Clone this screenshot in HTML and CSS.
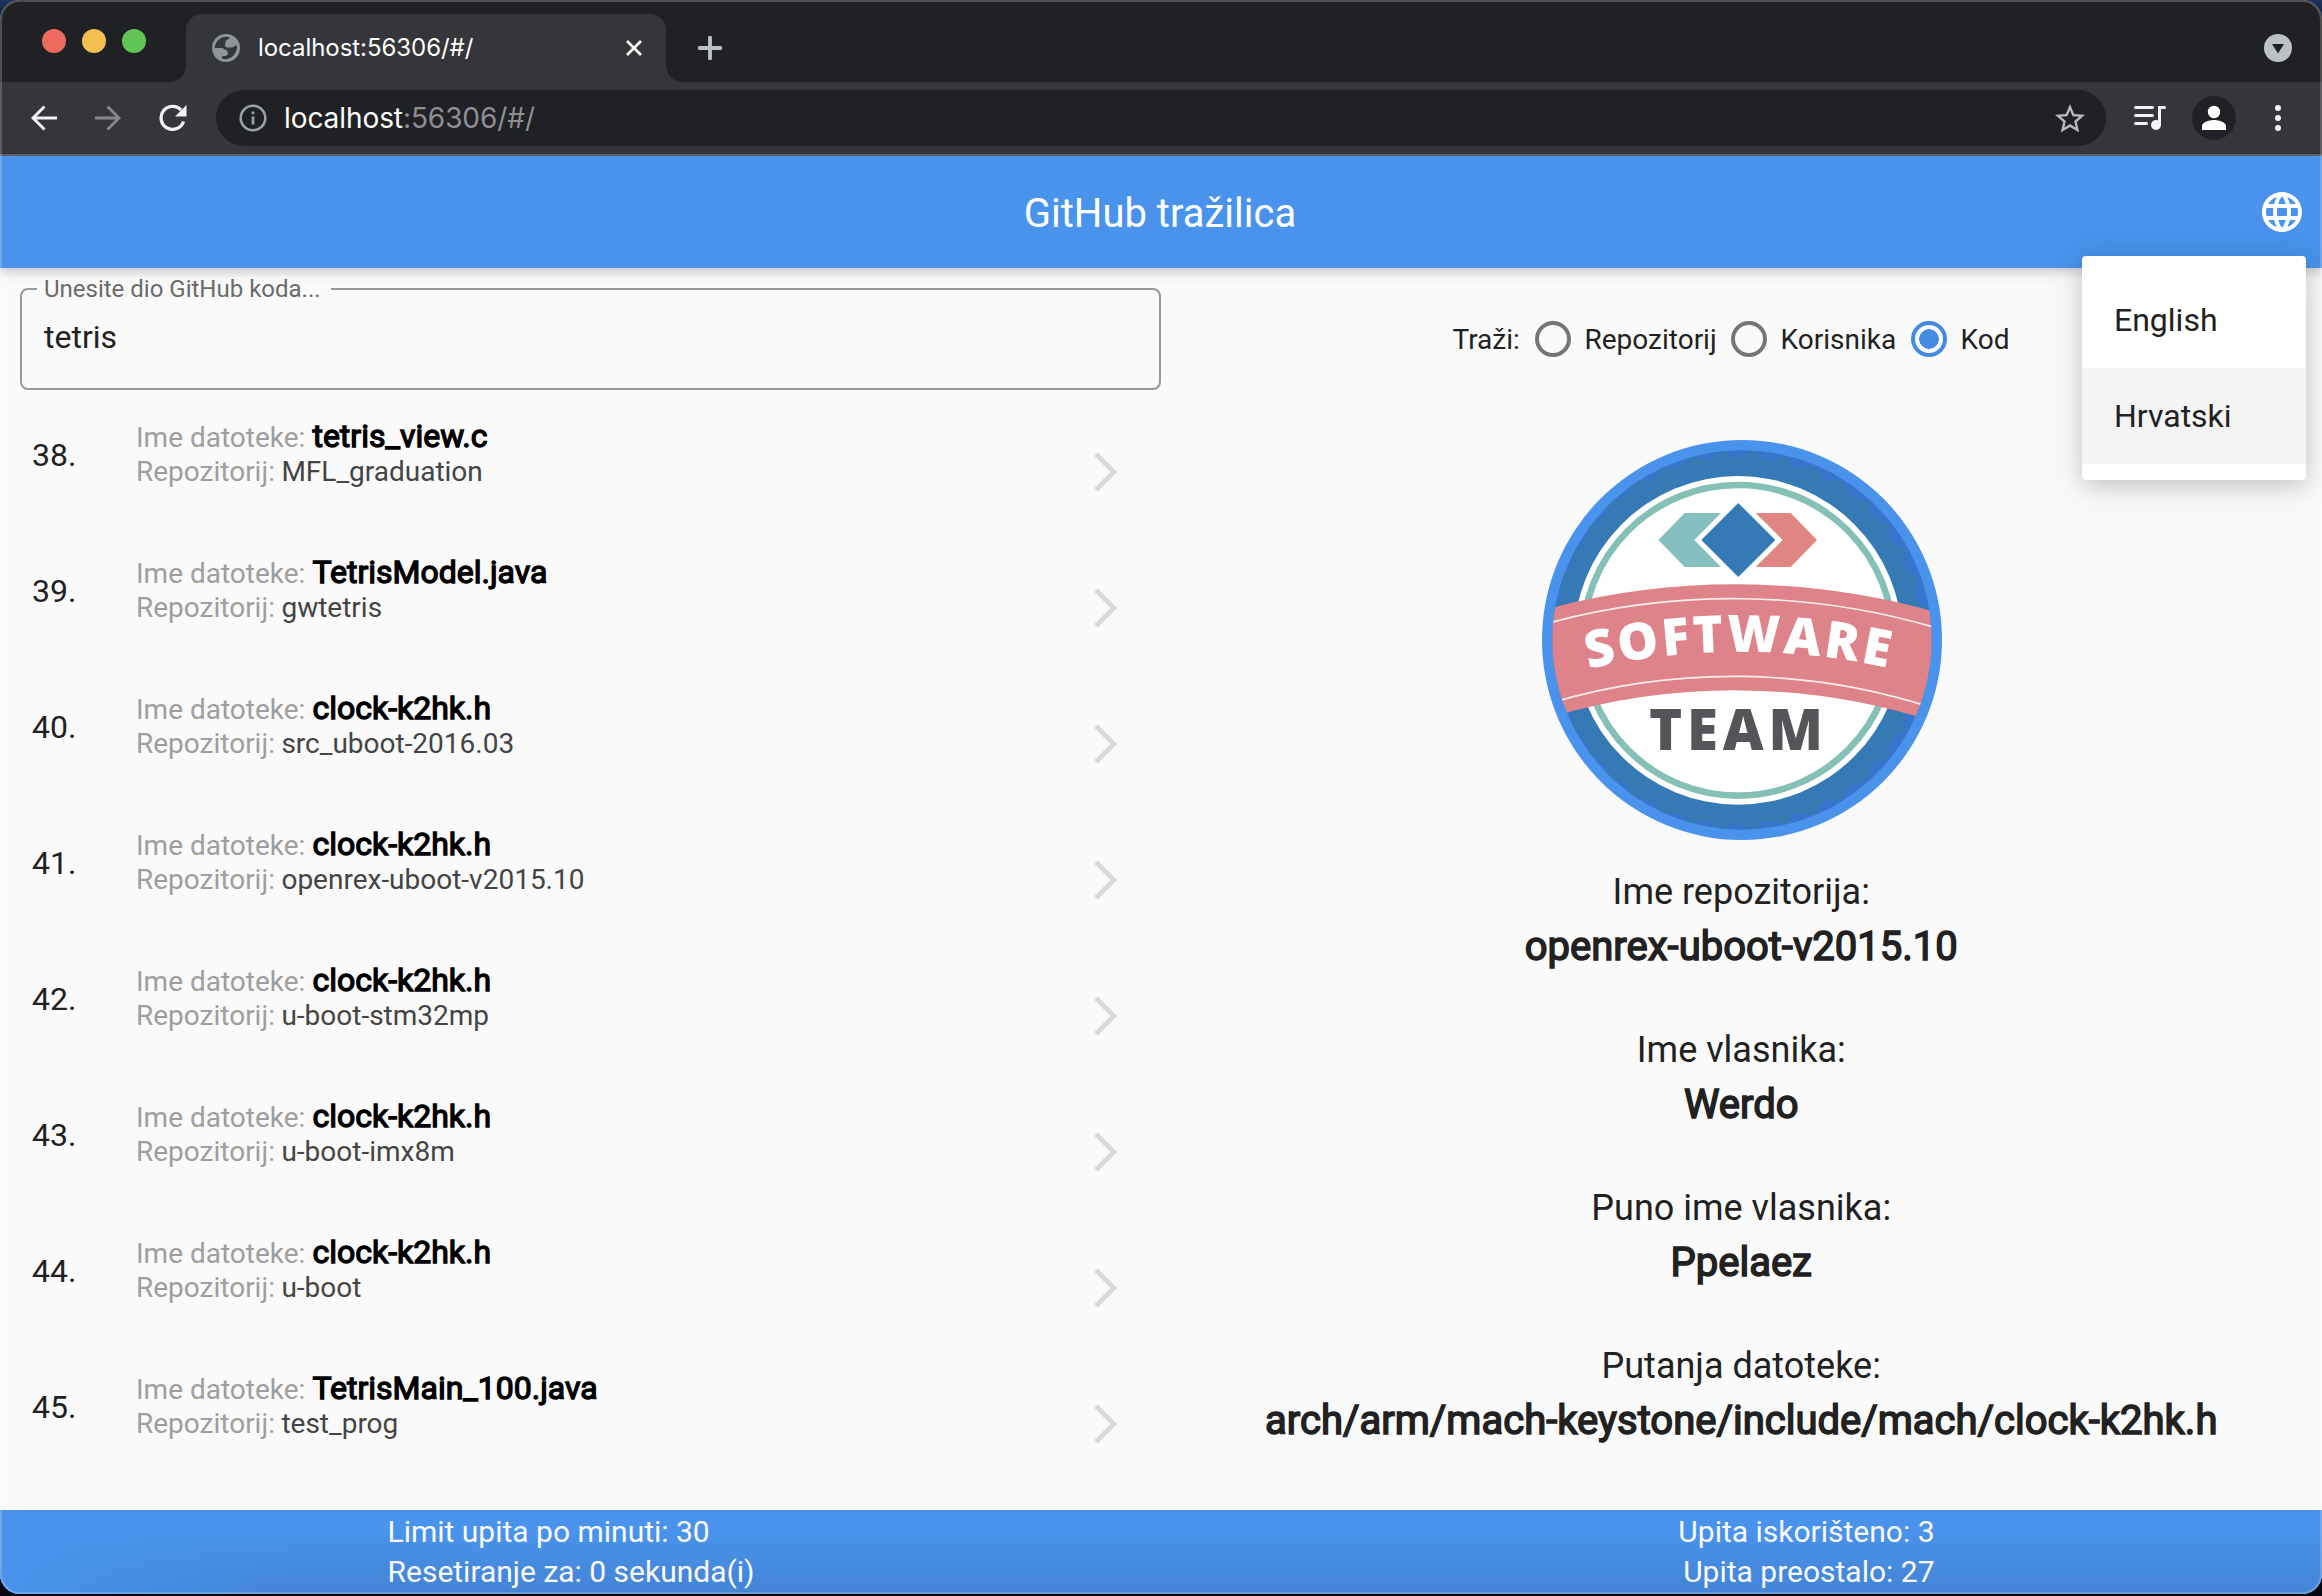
FILE: index.html
```html
<!DOCTYPE html>
<html lang="hr">
<head>
<meta charset="utf-8">
<title>GitHub tražilica</title>
<link rel="stylesheet" href="styles.css">
</head>
<body>
<svg class="defs" width="0" height="0">
  <symbol id="chevron" viewBox="0 0 24 40"><path d="M2 2.2 19.8 20 2 37.8" fill="none" stroke="#d9d9d9" stroke-width="5"/></symbol>
</svg>
<div class="window">
  <div class="tabstrip">
    <div class="lights"><i class="light red"></i><i class="light yellow"></i><i class="light green"></i></div>
    <div class="tab">
      <svg class="favicon" viewBox="2 2 20 20" width="28" height="28"><circle cx="12" cy="12" r="10" fill="#8f949a"/><path d="M4 12C4 8 7.500 4.200 12 4l2.500.4c.3 1.600-2.700 1.500-2.700 3 0 1.200-.6 1.700-.6 2.400 0 1.300 1.300 1.900 2.600 1.900h2.400c1 0 1.700-.6 1.800-1.300h1.800c.3 4.200-2.400 9-7.800 9.600l-2.800-.3v-2h1.900c1.500 0 2.300-.9 2.300-2.200 0-1.600-1.300-2.400-2.700-2.400-.5-.9-1.100-1.100-2.200-1.100z" fill="#35363a"/></svg>
      <span class="tab-title">localhost:56306/#/</span>
      <svg class="close" viewBox="0 0 16 16" width="16" height="16"><path d="M1 1l14 14M15 1 1 15" stroke="#fff" stroke-width="2.600"/></svg>
    </div>
    <svg class="plus" viewBox="0 0 24 24" width="24" height="24"><path d="M12 1.500v21M1.500 12h21" stroke="#bdc1c6" stroke-width="3.800" stroke-linecap="round"/></svg>
    <svg class="caret" viewBox="0 0 28 28" width="28" height="28"><circle cx="14" cy="14" r="14" fill="#bdc1c6"/><path d="M8 10h12l-6 9.500z" fill="#202124"/></svg>
  </div>
  <div class="toolbar">
    <svg class="nav" viewBox="0 0 26 26" width="26" height="26"><path d="M26 13H2.500M13.500 1.500 2 13l11.500 11.500" fill="none" stroke="#f1f3f4" stroke-width="3"/></svg>
    <svg class="nav" viewBox="0 0 26 26" width="26" height="26"><path d="M0 13h23.500M12.500 1.500 24 13 12.500 24.500" fill="none" stroke="#86878a" stroke-width="3"/></svg>
    <svg class="nav" viewBox="0 0 28 28" width="28" height="28"><path d="M24.500 17.500A11.500 11.500 0 1 1 22 6" fill="none" stroke="#f1f3f4" stroke-width="3.300"/><path d="M27.500 1v11.500H16z" fill="#f1f3f4"/></svg>
    <div class="omnibox">
      <svg viewBox="0 0 28 28" width="28" height="28"><circle cx="14" cy="14" r="12.300" fill="none" stroke="#9aa0a6" stroke-width="2.600"/><path d="M14 12.500v8M14 7.500v2.800" stroke="#9aa0a6" stroke-width="2.800"/></svg>
      <span class="url">localhost<span class="url-rest">:56306/#/</span></span>
      <svg class="star" viewBox="2 2 20 19" width="30" height="28.500"><path d="m22 9.240-7.190-.62L12 2 9.190 8.630 2 9.240l5.460 4.730L5.820 21 12 17.270 18.180 21l-1.630-7.030L22 9.240zM12 15.400l-3.760 2.270 1-4.280-3.320-2.880 4.380-.38L12 6.100l1.710 4.040 4.380.38-3.320 2.880 1 4.280L12 15.400z" fill="#b8b8ba"/></svg>
    </div>
    <svg class="music" viewBox="0 0 32 26" width="32" height="26"><path d="M1.500 2.500h17M1.500 10.500h17M1.500 18.500h11M25.500 19V2.500h5" fill="none" stroke="#f1f3f4" stroke-width="3" stroke-linecap="round"/><circle cx="22" cy="20" r="5" fill="#f1f3f4"/></svg>
    <svg class="avatar" viewBox="0 0 44 44" width="44" height="44"><circle cx="22" cy="22" r="22" fill="#202124"/><circle cx="22" cy="16" r="6.200" fill="#fff"/><path d="M10 34v-4c0-4 8-6 12-6s12 2 12 6v4z" fill="#fff"/></svg>
    <svg class="dots" viewBox="0 0 6 26" width="6" height="26"><circle cx="3" cy="3" r="3"/><circle cx="3" cy="13" r="3"/><circle cx="3" cy="23" r="3"/></svg>
  </div>

  <header class="appbar">
    <h1>GitHub tražilica</h1>
    <svg class="globe" viewBox="2 2 20 20" width="40" height="40"><path fill="#fff" d="M11.990 2C6.470 2 2 6.480 2 12s4.470 10 9.990 10C17.520 22 22 17.520 22 12S17.520 2 11.990 2zm6.930 6h-2.950c-.32-1.250-.78-2.450-1.380-3.560 1.840.63 3.370 1.910 4.330 3.560zM12 4.040c.83 1.200 1.480 2.530 1.910 3.960h-3.820c.43-1.430 1.080-2.760 1.910-3.960zM4.260 14C4.100 13.360 4 12.690 4 12s.1-1.360.26-2h3.380c-.08.66-.14 1.320-.14 2s.06 1.340.14 2H4.260zm.82 2h2.950c.32 1.250.78 2.450 1.380 3.560-1.840-.63-3.370-1.900-4.330-3.560zm2.950-8H5.080c.96-1.660 2.490-2.930 4.330-3.560C8.810 5.550 8.350 6.750 8.030 8zM12 19.960c-.83-1.200-1.480-2.530-1.910-3.960h3.820c-.43 1.430-1.080 2.760-1.910 3.960zM14.340 14H9.660c-.09-.66-.16-1.320-.16-2s.07-1.350.16-2h4.680c.09.65.16 1.320.16 2s-.07 1.340-.16 2zm.25 5.560c.6-1.110 1.060-2.310 1.380-3.560h2.950c-.96 1.650-2.490 2.930-4.330 3.560zM16.360 14c.08-.66.14-1.320.14-2s-.06-1.340-.14-2h3.380c.16.64.26 1.310.26 2s-.1 1.360-.26 2h-3.380z"/></svg>
    <div class="menu">
      <div class="menu-item">English</div>
      <div class="menu-item selected">Hrvatski</div>
    </div>
  </header>

  <main class="content">
    <section class="results">
      <fieldset class="field"><legend>Unesite dio GitHub koda...</legend><div class="field-value">tetris</div></fieldset>
      <ol class="list">
        <li class="row"><span class="num">38.</span><div class="info"><div class="line1"><span class="key">Ime datoteke:</span><b>tetris_view.c</b></div><div class="line2"><span class="key">Repozitorij:</span><span>MFL_graduation</span></div></div><svg class="chev"><use href="#chevron"/></svg></li>
        <li class="row"><span class="num">39.</span><div class="info"><div class="line1"><span class="key">Ime datoteke:</span><b>TetrisModel.java</b></div><div class="line2"><span class="key">Repozitorij:</span><span>gwtetris</span></div></div><svg class="chev"><use href="#chevron"/></svg></li>
        <li class="row"><span class="num">40.</span><div class="info"><div class="line1"><span class="key">Ime datoteke:</span><b>clock-k2hk.h</b></div><div class="line2"><span class="key">Repozitorij:</span><span>src_uboot-2016.03</span></div></div><svg class="chev"><use href="#chevron"/></svg></li>
        <li class="row"><span class="num">41.</span><div class="info"><div class="line1"><span class="key">Ime datoteke:</span><b>clock-k2hk.h</b></div><div class="line2"><span class="key">Repozitorij:</span><span>openrex-uboot-v2015.10</span></div></div><svg class="chev"><use href="#chevron"/></svg></li>
        <li class="row"><span class="num">42.</span><div class="info"><div class="line1"><span class="key">Ime datoteke:</span><b>clock-k2hk.h</b></div><div class="line2"><span class="key">Repozitorij:</span><span>u-boot-stm32mp</span></div></div><svg class="chev"><use href="#chevron"/></svg></li>
        <li class="row"><span class="num">43.</span><div class="info"><div class="line1"><span class="key">Ime datoteke:</span><b>clock-k2hk.h</b></div><div class="line2"><span class="key">Repozitorij:</span><span>u-boot-imx8m</span></div></div><svg class="chev"><use href="#chevron"/></svg></li>
        <li class="row"><span class="num">44.</span><div class="info"><div class="line1"><span class="key">Ime datoteke:</span><b>clock-k2hk.h</b></div><div class="line2"><span class="key">Repozitorij:</span><span>u-boot</span></div></div><svg class="chev"><use href="#chevron"/></svg></li>
        <li class="row"><span class="num">45.</span><div class="info"><div class="line1"><span class="key">Ime datoteke:</span><b>TetrisMain_100.java</b></div><div class="line2"><span class="key">Repozitorij:</span><span>test_prog</span></div></div><svg class="chev"><use href="#chevron"/></svg></li>
      </ol>
    </section>

    <section class="details">
      <div class="filters">
        <span class="filters-label">Traži:</span>
        <i class="radio"></i><span class="option opt-repo">Repozitorij</span>
        <i class="radio"></i><span class="option opt-user">Korisnika</span>
        <i class="radio checked"></i><span class="option">Kod</span>
      </div>
      <svg class="badge" viewBox="65 60 1200 1200" width="400" height="400">
        <defs><clipPath id="disc"><circle cx="665" cy="660" r="569"/></clipPath>
        <path id="arc" d="M193 749A2083 2083 0 0 1 1128 749"/></defs>
        <circle cx="665" cy="660" r="600" fill="#4993ec"/>
        <g clip-path="url(#disc)">
          <circle cx="665" cy="660" r="570" fill="#3874cc"/>
          <circle cx="653" cy="661" r="550" fill="#367ab5"/>
          <circle cx="653" cy="661" r="539" fill="none" stroke="#367ab5" stroke-width="60" stroke-linecap="round" pathLength="38" stroke-dasharray="0 1"/>
          <circle cx="653" cy="661" r="493" fill="#fff"/>
          <circle cx="653" cy="661" r="466" fill="none" stroke="#85c0b6" stroke-width="20"/>
          <path d="M50 575A2207 2207 0 0 1 1280 586V918A1940 1940 0 0 0 50 904.500Z" fill="#de8389"/>
          <path d="M50 618.500A2150 2150 0 0 1 1280 633.500M50 861.400A1930 1930 0 0 1 1280 878.200" fill="none" stroke="#fbeeee" stroke-width="5"/>
        </g>
        <path d="M414 360 493 279H602L522 360 602 441H493Z" fill="#85bfbf"/>
        <path d="M706 279H811L890 360 811 441H706L787 360Z" fill="#e08784"/>
        <path d="M654 249 765 360 654 471 543 360Z" fill="#367ab5"/>
        <text class="badge-text" font-size="154" fill="#fff"><textPath href="#arc" startOffset="11" textLength="905" lengthAdjust="spacing">SOFTWARE</textPath></text>
        <text class="badge-text" x="386" y="991" font-size="169" fill="#545459" textLength="522">TEAM</text>
      </svg>
      <dl class="facts">
        <dt>Ime repozitorija:</dt><dd>openrex-uboot-v2015.10</dd>
        <dt>Ime vlasnika:</dt><dd>Werdo</dd>
        <dt>Puno ime vlasnika:</dt><dd>Ppelaez</dd>
        <dt>Putanja datoteke:</dt><dd>arch/arm/mach-keystone/include/mach/clock-k2hk.h</dd>
      </dl>
    </section>
  </main>

  <footer class="footer">
    <div>Limit upita po minuti: 30<br>Resetiranje za: 0 sekunda(i)</div>
    <div class="footer-right">Upita iskorišteno: 3<br>Upita preostalo: 27</div>
  </footer>
</div>
</body>
</html>
```
FILE: styles.css
```css
* { box-sizing: border-box; }
body { margin: 0; height: 1596px; overflow: hidden; background: linear-gradient(#1d3561, #04070f 40px); font-family: Roboto, sans-serif; color: #212121; }
svg { display: block; flex: none; }
.defs { position: absolute; }
.window { position: relative; display: flex; flex-direction: column; height: 1594px; border-radius: 20px; overflow: hidden; background: #fafafa; }
.window::after { content: ""; position: absolute; z-index: 3; inset: 0; border-radius: 20px; box-shadow: inset 0 0 0 2px rgba(255, 255, 255, .2); pointer-events: none; }

.tabstrip { display: flex; align-items: center; height: 82px; padding: 14px 30px 0 42px; background: #202124; font-family: Inter, sans-serif; }
.lights { display: flex; gap: 16px; width: 144px; margin-bottom: 14px; }
.light { width: 24px; height: 24px; border-radius: 50%; }
.red { background: #ed6a5e; }
.yellow { background: #f5bf4f; }
.green { background: #61c554; }
.tab { position: relative; display: flex; align-items: center; width: 480px; height: 68px; padding: 0 24px 0 26px; border-radius: 16px 16px 0 0; background: #35363a; }
.tab::before, .tab::after { content: ""; position: absolute; bottom: 0; width: 16px; height: 16px; }
.tab::before { left: -16px; background: radial-gradient(circle at 0 0, transparent 15.500px, #35363a 16px); }
.tab::after { right: -16px; background: radial-gradient(circle at 100% 0, transparent 15.500px, #35363a 16px); }
.tab-title { margin: -2px 0 0 18px; font-size: 24px; letter-spacing: -.05px; color: #fff; }
.close { margin-left: auto; }
.plus { margin: 0 auto 0 32px; }

.toolbar { display: flex; align-items: center; height: 74px; padding: 0 41px 0 31px; background: #35363a; border-bottom: 2px solid #606165; font-family: Inter, sans-serif; }
.nav { margin-right: 38px; }
.nav + .nav + .nav { margin-right: 29px; }
.omnibox { display: flex; align-items: center; width: 1890px; height: 56px; padding: 0 21px 0 23px; border-radius: 28px; background: #202124; }
.url { margin-left: 17px; font-size: 28px; letter-spacing: -.08px; color: #fff; }
.url-rest { color: #8e8f92; }
.star { margin-left: auto; }
.music { margin-left: 28px; }
.avatar { margin-left: 26px; }
.dots { margin-left: 39px; fill: #f1f3f4; }

.appbar { position: relative; z-index: 2; display: flex; align-items: center; justify-content: center; height: 112px; background: #4993ec; box-shadow: 0 4px 8px rgba(0, 0, 0, .12), 0 6px 14px rgba(0, 0, 0, .08); }
h1 { margin: 2px 0 0 -2px; font-size: 40px; font-weight: 400; color: #fff; }
.globe { position: absolute; right: 20px; top: 36px; }
.menu { position: absolute; right: 16px; top: 100px; width: 224px; height: 224px; padding: 16px 0; border-radius: 4px; background: #fff; box-shadow: 0 6px 20px rgba(0, 0, 0, .12), 0 6px 40px rgba(0, 0, 0, .12); }
.menu-item { height: 96px; padding-left: 32px; font-size: 32px; line-height: 96px; }
.selected { background: #f4f4f4; }

.content { display: grid; grid-template-columns: 1fr 1fr; height: 1242px; }
.results { padding: 9px 0 0 20px; }
.field { height: 113px; margin: 0; padding: 0 22px 0 15px; border: 2px solid #999; border-radius: 8px; }
.field legend { height: 24px; padding: 0 10px 0 7px; font-size: 24px; line-height: 24px; color: #6b6b6b; }
.field-value { padding: 16px 0 0 7px; font-size: 32px; line-height: 40px; }
.list { margin: 14px 0 0; padding: 0; list-style: none; }
.row { display: flex; height: 136px; padding-left: 12px; }
.num { width: 104px; margin-top: 31px; font-size: 32px; line-height: 40px; }
.info { padding-top: 15px; font-size: 28px; color: #444; }
.line1, .line2 { display: flex; align-items: baseline; gap: 7px; white-space: nowrap; }
.line1 { height: 35px; line-height: 35px; }
.line2 { height: 36px; line-height: 36px; gap: 6.500px; }
.line1 b { font-size: 32px; font-weight: 400; color: #000; -webkit-text-stroke: 1.300px #000; }
.key { color: #9e9e9e; }
.chev { width: 24px; height: 40px; margin: 48px 43.500px 0 auto; }

.details { display: flex; flex-direction: column; align-items: center; }
.filters { display: flex; align-items: center; width: 100%; height: 142px; padding-left: 291.500px; font-size: 28px; }
.radio { flex: none; width: 36px; height: 36px; border: 4px solid #757575; border-radius: 50%; }
.filters-label { width: 82px; }
.option { margin-left: 14px; }
.opt-repo { width: 146px; }
.opt-user { width: 130px; }
.checked { border-color: #448ae0; background: radial-gradient(circle, #448ae0 9.500px, transparent 10px); }
.badge { margin-top: 30px; }
.badge-text { font-family: "Open Sans", sans-serif; font-weight: 800; }
.facts { margin: 24px .500px 0 0; text-align: center; white-space: nowrap; }
.facts dt { font-size: 36px; line-height: 56px; }
.facts dd { margin: 0 0 48px; font-size: 40px; line-height: 54px; -webkit-text-stroke: 1.500px #212121; }

.footer { display: flex; justify-content: space-between; height: 84px; padding: 2px 387.500px 0; background: linear-gradient(90deg, #4993ec 0, rgba(73, 147, 236, 0) 300px), linear-gradient(#4993ec 25%, #4384d5); font-size: 30px; line-height: 40px; color: #fafafa; }
.footer-right { text-align: right; }
```
